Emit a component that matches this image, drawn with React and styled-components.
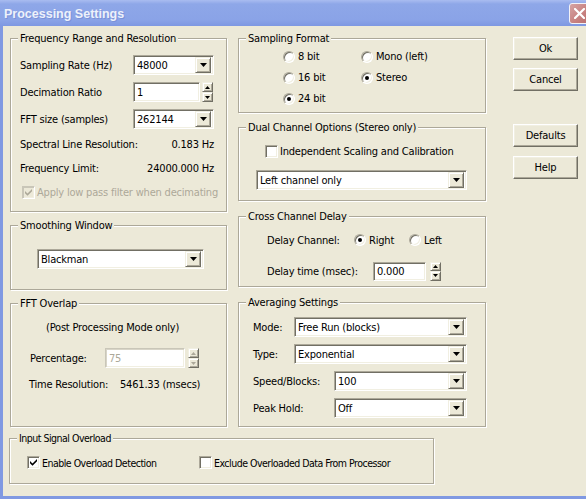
import React from "react";
import styled, { createGlobalStyle } from "styled-components";

const Global = createGlobalStyle`
  html, body { margin: 0; padding: 0; overflow: hidden; }
  body {
    background: #ECE9D8;
    font-family: "DejaVu Sans Condensed", "Liberation Sans", sans-serif;
    font-size: 11px;
    letter-spacing: -0.2px;
    color: #000;
  }
`;

const Window = styled.div`
  width: 592px;
  height: 499px;
  display: flex;
  flex-direction: column;
`;

const TitleBar = styled.div`
  height: 26px;
  flex-shrink: 0;
  display: flex;
  align-items: center;
  justify-content: space-between;
  padding: 0 2px 0 4px;
  box-sizing: border-box;
  background: linear-gradient(#A9BCF0 0px, #8EA7E8 4px, #8AA3E7 20px, #7E98E2 26px);
`;

const Title = styled.div`
  font-family: "Liberation Sans", sans-serif;
  font-weight: bold;
  font-size: 12.5px;
  letter-spacing: 0;
  color: #EDF1FB;
  text-shadow: 1px 1px 0 #7A92D8;
  margin-top: 1px;
`;

const CloseButton = styled.div`
  width: 21px;
  height: 21px;
  box-sizing: border-box;
  border: 1px solid #F2F2F8;
  border-radius: 3px;
  background: linear-gradient(135deg, #D6A4A4, #C7807F 60%, #B86F6E);
  display: flex;
  align-items: center;
  justify-content: center;
  margin-top: 1px;
`;

const Body = styled.div`
  height: 473px;
  box-sizing: border-box;
  background: #ECE9D8;
  border-left: 3px solid #8099E2;
  border-bottom: 3px solid #8099E2;
  padding: 12px 0 0 7px;
`;

const Main = styled.div`
  display: flex;
  align-items: flex-start;
`;

const Column = styled.div`
  width: ${(p) => p.$w}px;
  margin-right: ${(p) => p.$mr || 0}px;
  display: flex;
  flex-direction: column;
  flex-shrink: 0;
`;

const GroupBox = styled.div`
  position: relative;
  box-sizing: border-box;
  width: ${(p) => (p.$w ? `${p.$w}px` : "100%")};
  height: ${(p) => p.$h}px;
  margin-top: ${(p) => p.$mt || 0}px;
  margin-left: ${(p) => p.$ml || 0}px;
  border: 1px solid #ACA899;
  box-shadow: inset 1px 1px 0 #fff, 1px 1px 0 #fff;
  padding: ${(p) => p.$pad || "0"};
  display: flex;
  flex-direction: column;
  gap: ${(p) => p.$gap || 0}px;
  font-size: ${(p) => (p.$compact ? "10.5px" : "inherit")};
  letter-spacing: ${(p) => (p.$compact ? "-0.5px" : "inherit")};
`;

const Legend = styled.div`
  position: absolute;
  top: -7px;
  left: 7px;
  padding: 0 2px;
  line-height: 13px;
  background: #ECE9D8;
  white-space: nowrap;
`;

const Row = styled.div`
  display: flex;
  align-items: center;
  height: ${(p) => p.$h || 20}px;
  margin-left: ${(p) => p.$ml || 0}px;
  margin-top: ${(p) => p.$mt || 0}px;
  color: ${(p) => (p.$disabled ? "#ACA899" : "#000")};
  white-space: nowrap;
`;

const Label = styled.span`
  width: ${(p) => p.$w}px;
  flex-shrink: 0;
`;

const Value = styled.span`
  margin-left: auto;
`;

const Field = styled.div`
  width: ${(p) => p.$w}px;
  height: ${(p) => p.$h || 20}px;
  box-sizing: border-box;
  flex-shrink: 0;
  border: 1px solid;
  border-color: ${(p) =>
    p.$disabled ? "#C9C6B8 #fff #fff #C9C6B8" : "#ACA899 #fff #fff #ACA899"};
  box-shadow: ${(p) =>
    p.$disabled
      ? "inset 1px 1px 0 #D8D5C8, inset -1px -1px 0 #F1EFE2"
      : "inset 1px 1px 0 #716F64, inset -1px -1px 0 #F1EFE2"};
  background: #fff;
  padding: 2px;
  display: flex;
  align-items: center;
  color: ${(p) => (p.$disabled ? "#ACA899" : "#000")};
`;

const FieldText = styled.span`
  flex: 1;
  overflow: hidden;
  padding-left: 1px;
`;

const ArrowButton = styled.div`
  width: 16px;
  height: 16px;
  box-sizing: border-box;
  flex-shrink: 0;
  background: #ECE9D8;
  border: 1px solid;
  border-color: #F1EFE2 #716F64 #716F64 #F1EFE2;
  box-shadow: inset 1px 1px 0 #fff, inset -1px -1px 0 #ACA899;
  display: flex;
  align-items: center;
  justify-content: center;
`;

const Spin = styled.div`
  width: 11px;
  height: ${(p) => p.$h || 20}px;
  margin-left: ${(p) => p.$ml || 2}px;
  display: flex;
  flex-direction: column;
  flex-shrink: 0;
`;

const SpinHalf = styled.div`
  flex: 1;
  box-sizing: border-box;
  background: #ECE9D8;
  border: 1px solid;
  border-color: #F1EFE2 #716F64 #716F64 #F1EFE2;
  box-shadow: inset 1px 1px 0 #fff, inset -1px -1px 0 #ACA899;
  display: flex;
  align-items: center;
  justify-content: center;
`;

const RadioCircle = styled.span`
  width: 12px;
  height: 12px;
  box-sizing: border-box;
  flex-shrink: 0;
  border-radius: 50%;
  border: 1px solid;
  border-color: #ACA899 #fff #fff #ACA899;
  box-shadow: inset 1px 1px 0 #716F64, inset -1px -1px 0 #F1EFE2;
  background: #fff;
  display: flex;
  align-items: center;
  justify-content: center;
  margin-right: 3px;

  &::after {
    content: "";
    width: 4px;
    height: 4px;
    border-radius: 50%;
    background: ${(p) => (p.$on ? "#000" : "transparent")};
  }
`;

const Option = styled.div`
  display: flex;
  align-items: center;
  width: ${(p) => (p.$w ? `${p.$w}px` : "auto")};
  height: ${(p) => p.$h || 21}px;
  color: ${(p) => (p.$disabled ? "#ACA899" : "#000")};
  white-space: nowrap;
`;

const CheckBox = styled.span`
  width: 13px;
  height: 13px;
  box-sizing: border-box;
  flex-shrink: 0;
  border: 1px solid;
  border-color: ${(p) =>
    p.$disabled ? "#C9C6B8 #fff #fff #C9C6B8" : "#ACA899 #fff #fff #ACA899"};
  box-shadow: ${(p) =>
    p.$disabled
      ? "inset 1px 1px 0 #C9C6B8, inset -1px -1px 0 #F1EFE2"
      : "inset 1px 1px 0 #716F64, inset -1px -1px 0 #F1EFE2"};
  background: ${(p) => (p.$disabled ? "#ECE9D8" : "#fff")};
  display: flex;
  align-items: center;
  justify-content: center;
  margin-right: ${(p) => p.$gap || 2}px;
`;

const FormatGrid = styled.div`
  display: grid;
  grid-template-columns: 78px auto;
  padding-left: 44px;
`;

const ButtonColumn = styled.div`
  display: flex;
  flex-direction: column;
  margin-top: -1px;
`;

const PushButton = styled.div`
  width: 65px;
  height: 23px;
  box-sizing: border-box;
  margin-top: ${(p) => p.$mt || 0}px;
  background: #ECE9D8;
  border: 1px solid;
  border-color: #fff #716F64 #716F64 #fff;
  box-shadow: inset -1px -1px 0 #ACA899, inset 1px 1px 0 #F1EFE2;
  display: flex;
  align-items: center;
  justify-content: center;
`;

function Arrow({ up, small, color = "#000" }) {
  if (small) {
    return (
      <svg width="5" height="3" viewBox="0 0 5 3">
        <path d={up ? "M2.5 0 L5 3 L0 3 Z" : "M0 0 L5 0 L2.5 3 Z"} fill={color} />
      </svg>
    );
  }
  return (
    <svg width="7" height="4" viewBox="0 0 7 4">
      <path d="M0 0 H7 L3.5 4 Z" fill={color} />
    </svg>
  );
}

function Combo({ w, value, h }) {
  return (
    <Field $w={w} $h={h}>
      <FieldText>{value}</FieldText>
      <ArrowButton>
        <Arrow />
      </ArrowButton>
    </Field>
  );
}

function SpinEdit({ w, value, h, disabled, ml }) {
  const c = disabled ? "#ACA899" : "#000";
  return (
    <>
      <Field $w={w} $h={h} $disabled={disabled}>
        <FieldText>{value}</FieldText>
      </Field>
      <Spin $h={h} $ml={ml}>
        <SpinHalf>
          <Arrow up small color={c} />
        </SpinHalf>
        <SpinHalf>
          <Arrow small color={c} />
        </SpinHalf>
      </Spin>
    </>
  );
}

function Radio({ on, label, w, h }) {
  return (
    <Option $w={w} $h={h}>
      <RadioCircle $on={on} />
      {label}
    </Option>
  );
}

function Check({ on, label, disabled, w }) {
  const c = disabled ? "#ACA899" : "#000";
  return (
    <Option $w={w} $h={13} $disabled={disabled}>
      <CheckBox $disabled={disabled}>
        {on && (
          <svg width="7" height="7" viewBox="0 0 7 7">
            <path d="M0 2 L2.5 4.5 L7 0 V2.2 L2.5 6.7 L0 4.2 Z" fill={c} />
          </svg>
        )}
      </CheckBox>
      {label}
    </Option>
  );
}

export default function App() {
  return (
    <>
      <Global />
      <Window>
        <TitleBar>
          <Title>Processing Settings</Title>
          <CloseButton>
            <svg width="11" height="11" viewBox="0 0 11 11">
              <path d="M1 1 L10 10 M10 1 L1 10" stroke="#fff" strokeWidth="2.2" strokeLinecap="square" />
            </svg>
          </CloseButton>
        </TitleBar>
        <Body>
          <Main>
            <Column $w={217} $mr={11}>
              <GroupBox $h={174} $pad="16px 12px 0 9px" $gap={7}>
                <Legend>Frequency Range and Resolution</Legend>
                <Row>
                  <Label $w={113}>Sampling Rate (Hz)</Label>
                  <Combo w={81} value="48000" />
                </Row>
                <Row>
                  <Label $w={113}>Decimation Ratio</Label>
                  <SpinEdit w={67} value="1" ml={2} />
                </Row>
                <Row>
                  <Label $w={113}>FFT size (samples)</Label>
                  <Combo w={81} value="262144" />
                </Row>
                <Row $h={17}>
                  <span>Spectral Line Resolution:</span>
                  <Value>0.183 Hz</Value>
                </Row>
                <Row $h={17}>
                  <span>Frequency Limit:</span>
                  <Value>24000.000 Hz</Value>
                </Row>
                <Row $h={17} $ml={2}>
                  <Check on disabled label="Apply low pass filter when decimating" />
                </Row>
              </GroupBox>

              <GroupBox $h={65} $mt={13} $pad="23px 0 0 26px">
                <Legend>Smoothing Window</Legend>
                <Combo w={167} value="Blackman" />
              </GroupBox>

              <GroupBox $h={124} $mt={13} $pad="15px 0 0 0">
                <Legend>FFT Overlap</Legend>
                <Row $h={17} $ml={35}>
                  (Post Processing Mode only)
                </Row>
                <Row $mt={12} $ml={19}>
                  <Label $w={75}>Percentage:</Label>
                  <SpinEdit w={80} value="75" disabled ml={3} />
                </Row>
                <Row $h={17} $mt={8} $ml={18}>
                  <Label $w={91}>Time Resolution:</Label>
                  <span>5461.33 (msecs)</span>
                </Row>
              </GroupBox>
            </Column>

            <Column $w={248} $mr={27}>
              <GroupBox $h={75} $pad="7px 0 0 0">
                <Legend>Sampling Format</Legend>
                <FormatGrid>
                  <Radio label="8 bit" />
                  <Radio label="Mono (left)" />
                  <Radio label="16 bit" />
                  <Radio on label="Stereo" />
                  <Radio on label="24 bit" />
                </FormatGrid>
              </GroupBox>

              <GroupBox $h={74} $mt={14} $pad="17px 0 0 0">
                <Legend>Dual Channel Options (Stereo only)</Legend>
                <Row $h={13} $ml={26}>
                  <Check label="Independent Scaling and Calibration" />
                </Row>
                <Row $mt={12} $ml={17}>
                  <Combo w={211} value="Left channel only" />
                </Row>
              </GroupBox>

              <GroupBox $h={71} $mt={15} $pad="13px 0 0 0">
                <Legend>Cross Channel Delay</Legend>
                <Row $ml={28}>
                  <Label $w={87}>Delay Channel:</Label>
                  <Radio on w={55} h={20} label="Right" />
                  <Radio h={20} label="Left" />
                </Row>
                <Row $mt={11} $ml={28}>
                  <Label $w={106}>Delay time (msec):</Label>
                  <SpinEdit w={53} h={19} value="0.000" ml={4} />
                </Row>
              </GroupBox>

              <GroupBox $h={125} $mt={15} $pad="14px 0 0 14px" $gap={7}>
                <Legend>Averaging Settings</Legend>
                <Row>
                  <Label $w={41}>Mode:</Label>
                  <Combo w={173} value="Free Run (blocks)" />
                </Row>
                <Row>
                  <Label $w={41}>Type:</Label>
                  <Combo w={173} value="Exponential" />
                </Row>
                <Row>
                  <Label $w={81}>Speed/Blocks:</Label>
                  <Combo w={133} value="100" />
                </Row>
                <Row>
                  <Label $w={81}>Peak Hold:</Label>
                  <Combo w={133} value="Off" />
                </Row>
              </GroupBox>
            </Column>

            <ButtonColumn>
              <PushButton>Ok</PushButton>
              <PushButton $mt={8}>Cancel</PushButton>
              <PushButton $mt={33}>Defaults</PushButton>
              <PushButton $mt={9}>Help</PushButton>
            </ButtonColumn>
          </Main>

          <GroupBox $w={425} $h={46} $mt={11} $ml={-1} $pad="17px 0 0 0" $compact>
            <Legend>Input Signal Overload</Legend>
            <Row $h={13} $ml={17}>
              <Check on w={172} label="Enable Overload Detection" />
              <Check label="Exclude Overloaded Data From Processor" />
            </Row>
          </GroupBox>
        </Body>
      </Window>
    </>
  );
}
